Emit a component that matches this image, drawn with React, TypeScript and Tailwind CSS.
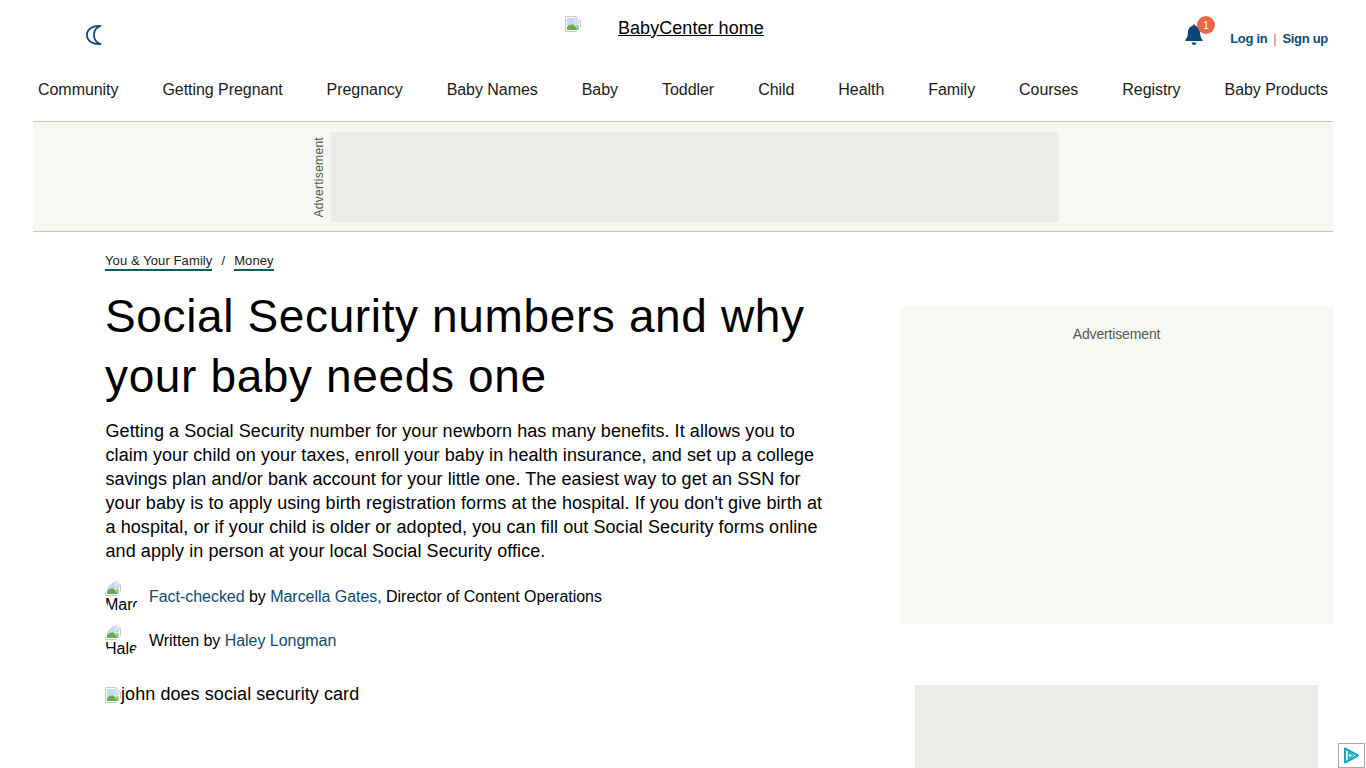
import React from "react";

const navItems = ["Community", "Getting Pregnant", "Pregnancy", "Baby Names", "Baby", "Toddler", "Child", "Health", "Family", "Courses", "Registry", "Baby Products"];

function BrokenImage() {
  return (
    <svg width="16" height="16" viewBox="0 0 16 16" className="shrink-0 inline-block align-baseline">
      <path d="M0.5 0.5H11L15.5 5V15.5H0.5Z" fill="#fff" stroke="#c3c7cc" />
      <path d="M11 0.5V5H15.5" fill="#eef1f5" stroke="#c3c7cc" />
      <path d="M2 2H10V6H14V8L2 10Z" fill="#c6d8f3" />
      <path d="M2 14V11C5 8 8 8 10 10L13 14Z" fill="#69a84f" />
      <path d="M10 10L12 8.5L14 10V14H13Z" fill="#a4cf8e" />
      <path d="M11 16L16 11V16Z" fill="#fff" />
    </svg>
  );
}

function Avatar({ alt }: { alt: string }) {
  return (
    <div className="w-[33px] h-[33px] rounded-full overflow-hidden shrink-0 text-[16px] leading-[18px] text-black">
      <div><BrokenImage /></div>
      <div className="-mt-[4px] whitespace-nowrap">{alt}</div>
    </div>
  );
}

export default function App() {
  return (
    <div className="relative h-screen overflow-hidden bg-white text-black font-['Liberation_Sans',Arial,sans-serif]">
      <div className="px-[33px]">
        <header className="flex items-start h-[68px]">
          <div className="w-[532px] pl-[52px] pt-[24px]">
            <svg width="18" height="22" viewBox="0 0 18 22" fill="none">
              <path d="M15.500 2C8 1.500 2 5 2 11s6 9.500 13.500 9C11 18.500 9 15 9 11s2-7.500 6.500-9Z" stroke="#0f4a6e" strokeWidth="1.800" strokeLinejoin="round" />
            </svg>
          </div>
          <div className="flex-1 flex pt-[16px]">
            <BrokenImage />
            <a className="ml-[37px] mt-[1px] text-[18px] leading-[22px] underline text-black tracking-[0.05px]">BabyCenter home</a>
          </div>
          <div className="flex items-start">
            <div className="relative w-[22px] h-[24px] mt-[24px]">
              <svg width="18" height="22" viewBox="0 0 18 22" className="ml-[1px]">
                <path d="M9 0.5c.9 0 1.5.7 1.5 1.6 3 .7 4.6 3.2 4.6 6.4 0 3.6 1 5.6 2.4 7.2.4.5.1 1.3-.6 1.3H1.1c-.7 0-1-.8-.6-1.3C1.9 14.100 2.900 12.100 2.900 8.500c0-3.200 1.600-5.700 4.600-6.400C7.500 1.200 8.100.5 9 .5Z" fill="#0a4677" />
                <path d="M6.500 18.500h5a2.500 2.500 0 0 1-5 0Z" fill="#0a4677" />
              </svg>
              <span className="absolute left-[13px] -top-[8px] w-[18px] h-[18px] rounded-full bg-[#ec6546] text-white text-[11px] leading-[18px] text-center">1</span>
            </div>
            <div className="ml-[24px] mt-[31px] mr-[5px] text-[13px] leading-[16px] font-bold text-[#0f4a78] flex items-center tracking-[-0.3px]">
              <span>Log in</span>
              <span className="mx-[6px] font-normal text-[#8a8a8a]">|</span>
              <span>Sign up</span>
            </div>
          </div>
        </header>
        <nav className="h-[54px] pl-[5px] pr-[5px] pt-[12px] flex justify-between border-b border-[#c4c4c4] text-[16px] leading-[20px] text-[#1a1a1a] tracking-[-0.05px]">
          {navItems.map((n) => (
            <a key={n}>{n}</a>
          ))}
        </nav>
        <div className="h-[110px] bg-[#f7f7f3] border-b border-[#c4c4c4] flex justify-center pt-[10px]">
          <div className="flex h-[90px] -ml-[1px]">
            <div className="w-[25px] h-[90px] flex items-center justify-center">
              <span className="[writing-mode:vertical-rl] rotate-180 text-[12px] leading-[14px] text-[#55554f] -mr-[1px] tracking-[0.3px]">Advertisement</span>
            </div>
            <div className="w-[728px] h-[90px] bg-[#ebebe7]"></div>
          </div>
        </div>
        <main className="flex">
          <article className="w-[867px] pl-[72px] pr-[147px] shrink-0">
            <div className="mt-[21px] flex text-[13px] leading-[16px] text-[#1a1a1a] tracking-[0.1px]">
              <a className="border-b-2 border-[#0b5f63]">You &amp; Your Family</a>
              <span className="mx-[9px]">/</span>
              <a className="border-b-2 border-[#0b5f63]">Money</a>
            </div>
            <h1 className="mt-[15px] text-[46px] leading-[60px] font-normal tracking-[0.63px] w-[720px]">Social Security numbers and why your baby needs one</h1>
            <p className="mt-[13px] pl-[0.5px] text-[18px] leading-[24px] w-[722px] tracking-[0.07px]">Getting a Social Security number for your newborn has many benefits. It allows you to claim your child on your taxes, enroll your baby in health insurance, and set up a college savings plan and/or bank account for your little one. The easiest way to get an SSN for your baby is to apply using birth registration forms at the hospital. If you don't give birth at a hospital, or if your child is older or adopted, you can fill out Social Security forms online and apply in person at your local Social Security office.</p>
            <div className="mt-[17px] flex items-start gap-[11px] text-[16px] leading-[24px] w-[720px]">
              <Avatar alt="Marc" />
              <div className="pt-[5px] whitespace-nowrap tracking-[-0.04px]"><a className="text-[#0f4a6e]">Fact-checked</a> by <a className="text-[#0f4a6e]">Marcella Gates,</a> Director of Content Operations</div>
            </div>
            <div className="mt-[11px] flex items-start gap-[11px] text-[16px] leading-[24px]">
              <Avatar alt="Hale" />
              <div className="pt-[5px] whitespace-nowrap tracking-[-0.04px]">Written by <a className="text-[#0f4a6e]">Haley Longman</a></div>
            </div>
            <div className="mt-[25px] flex items-start text-[18px] leading-[24px] whitespace-nowrap tracking-[0.07px]">
              <span className="pt-[3px]"><BrokenImage /></span>
              <span>john does social security card</span>
            </div>
          </article>
          <aside className="flex-1 pt-[74px]">
            <div className="h-[318px] bg-[#f7f7f3] pt-[20px] text-center text-[14px] leading-[16px] text-[#55554f] tracking-[-0.15px]">Advertisement</div>
            <div className="mt-[61px] mx-[15px] h-[250px] bg-[#ebebe7]"></div>
          </aside>
        </main>
      </div>
      <div className="absolute right-[1px] bottom-[0px] w-[27px] h-[25px] bg-white border border-[#a8a8a8] flex items-center justify-center">
        <svg width="17" height="17" viewBox="0 0 17 17" fill="none">
          <path d="M2 1.500V15.500L15 8.500Z" stroke="#1aa5c4" strokeWidth="2" strokeLinejoin="round" />
          <path d="M5.500 5V12L10 8.500Z" stroke="#1aa5c4" strokeWidth="1.500" />
        </svg>
      </div>
    </div>
  );
}
